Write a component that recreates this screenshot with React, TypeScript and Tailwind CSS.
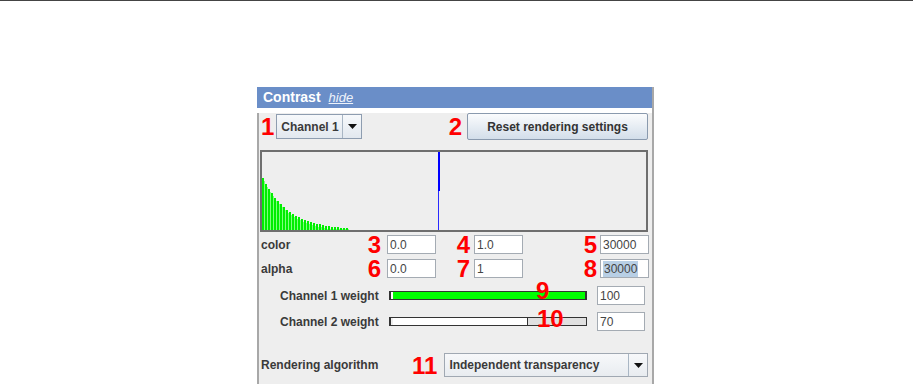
const bars = Array.from({ length: 29 }, (_, i) => Math.max(1, Math.round(52 * Math.exp(-i / 8.5))));

function Num({ n, className = "" }: { n: string; className?: string }) {
  return (
    <span className={`text-[24px] font-bold leading-[19px] text-[#ff0000] ${className}`}>{n}</span>
  );
}

function Field({ value, w, selected = false }: { value: string; w: string; selected?: boolean }) {
  return (
    <div
      className={`${w} flex h-[19px] items-center border border-[#a4abb3] bg-white pl-[2px] text-[12px] font-normal leading-none text-[#444]`}
    >
      {selected ? <span className="bg-[#b8cfe5] px-[1px] py-[2px]">{value}</span> : value}
    </div>
  );
}

function Arrow() {
  return (
    <div className="flex h-full w-[19px] items-center justify-center border-l border-[#a9b6c4]">
      <svg width="9" height="5" viewBox="0 0 9 5">
        <path d="M0 0h9L4.5 5z" fill="#111" />
      </svg>
    </div>
  );
}

export default function App() {
  return (
    <div className="min-h-screen bg-white font-['Liberation_Sans',Arial,sans-serif]">
      <div className="h-px bg-[#444]" />

      <div className="ml-[257px] mt-[86px] w-[397px] border-r-2 border-[#a8a8a8]">
        {/* header */}
        <div className="flex h-[21px] items-center bg-[#6a8ec8] pl-[6px] text-white">
          <span className="text-[14px] font-bold">Contrast</span>
          <span className="ml-[8px] text-[13px] italic underline text-[#eef3fb]">hide</span>
        </div>

        <div className="border-l-2 border-[#a8a8a8] bg-[#eeeeee] pb-[20px] text-[12px] font-bold text-[#3a3a3a]">
          {/* channel + reset */}
          <div className="mt-[5px] flex h-[27px] items-center">
            <Num n="1" className="pl-[2px]" />
            <div className="ml-[2px] flex h-[25px] w-[86px] items-center border border-[#8e9db0] bg-gradient-to-b from-[#f7f9fb] to-[#e2e8ef]">
              <span className="flex-1 pl-[4px]">Channel 1</span>
              <Arrow />
            </div>
            <div className="flex-1" />
            <Num n="2" className="mr-[5px]" />
            <button className="mr-[4px] h-[27px] w-[181px] rounded-[2px] border border-[#8a9aae] bg-gradient-to-b from-[#fbfcfd] to-[#d3deea] text-[12px] font-bold text-[#333]">
              Reset rendering settings
            </button>
          </div>

          {/* histogram */}
          <div className="ml-[1px] mt-[10px] h-[82px] w-[388px] border-2 border-[#6e6e6e] bg-[#eeeeee]">
            <svg width="384" height="78" viewBox="0 0 384 78" className="block">
              {bars.map((h, i) => (
                <g key={i}>
                  <rect x={i * 3} y={78 - h} width="2" height={h} fill="#00ee00" />
                  <rect x={i * 3 + 2} y={78 - Math.max(1, h - 3)} width="1" height={Math.max(1, h - 3)} fill="#7dff7d" />
                </g>
              ))}
              <rect x="176" y="0" width="2" height="39" fill="#0000ff" />
              <rect x="176" y="39" width="1" height="39" fill="#2a2aff" />
            </svg>
          </div>

          {/* color */}
          <div className="mt-[3px] flex h-[19px] items-center">
            <span className="w-[106px] pl-[2px]">color</span>
            <Num n="3" className="w-[16px] text-right" />
            <div className="ml-[6px]"><Field value="0.0" w="w-[49px]" /></div>
            <Num n="4" className="w-[34px] text-right" />
            <div className="ml-[4px]"><Field value="1.0" w="w-[49px]" /></div>
            <Num n="5" className="w-[74px] text-right" />
            <div className="ml-[3px]"><Field value="30000" w="w-[49px]" /></div>
          </div>

          {/* alpha */}
          <div className="mt-[5px] flex h-[19px] items-center">
            <span className="w-[106px] pl-[2px]">alpha</span>
            <Num n="6" className="w-[16px] text-right" />
            <div className="ml-[6px]"><Field value="0.0" w="w-[49px]" /></div>
            <Num n="7" className="w-[34px] text-right" />
            <div className="ml-[4px]"><Field value="1" w="w-[49px]" /></div>
            <Num n="8" className="w-[74px] text-right" />
            <div className="ml-[3px]"><Field value="30000" w="w-[49px]" selected /></div>
          </div>

          {/* channel 1 weight */}
          <div className="relative mt-[8px] flex h-[19px] items-center">
            <span className="w-[130px] pl-[21px]">Channel 1 weight</span>
            <div className="flex h-[9px] w-[198px] border border-[#333]">
              <div className="w-[1px] bg-[#333]" />
              <div className="w-[2px] bg-white" />
              <div className="flex-1 bg-[#00ff00]" />
              <div className="w-[1px] bg-[#333]" />
            </div>
            <div className="ml-[10px]"><Field value="100" w="w-[48px]" /></div>
            <Num n="9" className="absolute left-[277px] top-[-5px]" />
          </div>

          {/* channel 2 weight */}
          <div className="relative mt-[7px] flex h-[19px] items-center">
            <span className="w-[130px] pl-[21px]">Channel 2 weight</span>
            <div className="flex h-[9px] w-[198px] border border-[#333]">
              <div className="w-[1px] bg-[#333]" />
              <div className="w-[2px] bg-[#eee]" />
              <div className="w-[134px] bg-white" />
              <div className="w-[1px] bg-[#333]" />
              <div className="flex-1 bg-[#e0e0e0]" />
            </div>
            <div className="ml-[10px]"><Field value="70" w="w-[48px]" /></div>
            <Num n="10" className="absolute left-[278px] top-[-3px]" />
          </div>

          {/* rendering algorithm */}
          <div className="mt-[22px] flex h-[24px] items-center">
            <span className="w-[153px] pl-[2px]">Rendering algorithm</span>
            <Num n="11" />
            <div className="ml-[7px] flex h-[24px] w-[204px] items-center border border-[#a0a8b2] bg-gradient-to-b from-[#f7f8fa] to-[#e8ecf0]">
              <span className="flex-1 pl-[4px]">Independent transparency</span>
              <Arrow />
            </div>
          </div>
        </div>
      </div>
    </div>
  );
}
